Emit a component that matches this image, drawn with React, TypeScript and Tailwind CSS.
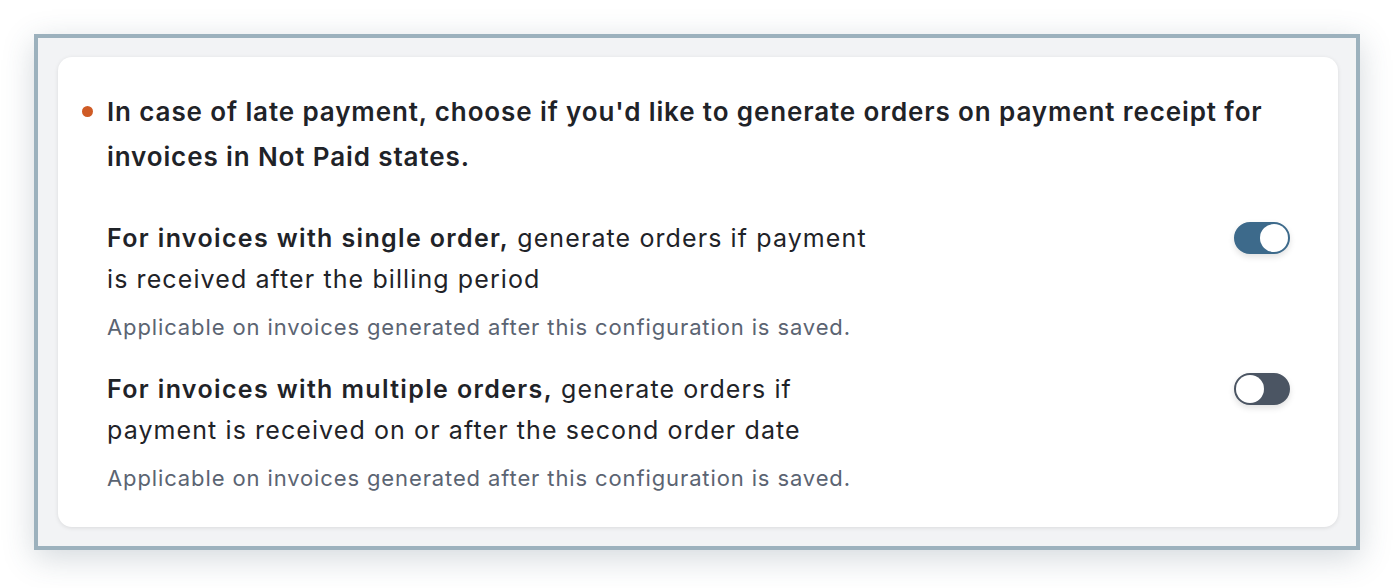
import React, { useState } from "react";

type Setting = {
  id: string;
  lead: string;
  rest: string;
  note: string;
};

const settings: Setting[] = [
  {
    id: "single",
    lead: "For invoices with single order,",
    rest: "generate orders if payment is received after the billing period",
    note: "Applicable on invoices generated after this configuration is saved.",
  },
  {
    id: "multiple",
    lead: "For invoices with multiple orders,",
    rest: "generate orders if payment is received on or after the second order date",
    note: "Applicable on invoices generated after this configuration is saved.",
  },
];

function Toggle({ on, onChange }: { on: boolean; onChange: () => void }) {
  return (
    <button
      type="button"
      onClick={onChange}
      className={`flex h-[32px] w-[56px] shrink-0 items-center rounded-full border-2 shadow-[0_3px_6px_rgba(0,0,0,0.12)] ${
        on ? "justify-end border-[#3d6a8b] bg-[#3d6a8b]" : "justify-start border-[#4b5563] bg-[#4b5563]"
      }`}
    >
      <span className="h-[28px] w-[28px] rounded-full bg-white" />
    </button>
  );
}

export default function App() {
  const [values, setValues] = useState<Record<string, boolean>>({
    single: true,
    multiple: false,
  });

  return (
    <div
      className="min-h-[588px] bg-white p-[34px]"
      style={{ fontFamily: "Inter, 'Noto Sans', sans-serif" }}
    >
      <div className="border-4 border-[#9cb1bd] bg-[#f2f3f5] py-[19px] pl-[20px] pr-[18px] shadow-[0_8px_30px_rgba(60,80,100,0.22)]">
        <div className="rounded-[14px] bg-white pb-[35px] pl-[49px] pr-[48px] pt-[32px] shadow-[0_1px_4px_rgba(0,0,0,0.10)]">
          <div className="relative">
            <span className="absolute left-[-25px] top-[17px] h-[11px] w-[11px] rounded-full bg-[#cf5b25]" />
            <p className="text-[26px] font-semibold leading-[45px] tracking-[0.034em] text-[#1f2328]">
              In case of late payment, choose if you'd like to generate orders on payment receipt for invoices in Not Paid states.
            </p>
          </div>

          <div className="mt-[39px] flex flex-col gap-[28px]">
            {settings.map((s) => (
              <div key={s.id} className="flex items-start justify-between">
                <div>
                  <p className="max-w-[770px] text-[25px] leading-[41px] tracking-[0.044em] text-[#1f2328]">
                    <span className="font-semibold tracking-[0.054em]">{s.lead}</span> {s.rest}
                  </p>
                  <p className="mt-[13px] text-[22px] leading-[28px] tracking-[0.04em] text-[#5b6472]">{s.note}</p>
                </div>
                <div className="mt-[4px]">
                  <Toggle
                    on={values[s.id]}
                    onChange={() => setValues((v) => ({ ...v, [s.id]: !v[s.id] }))}
                  />
                </div>
              </div>
            ))}
          </div>
        </div>
      </div>
    </div>
  );
}
